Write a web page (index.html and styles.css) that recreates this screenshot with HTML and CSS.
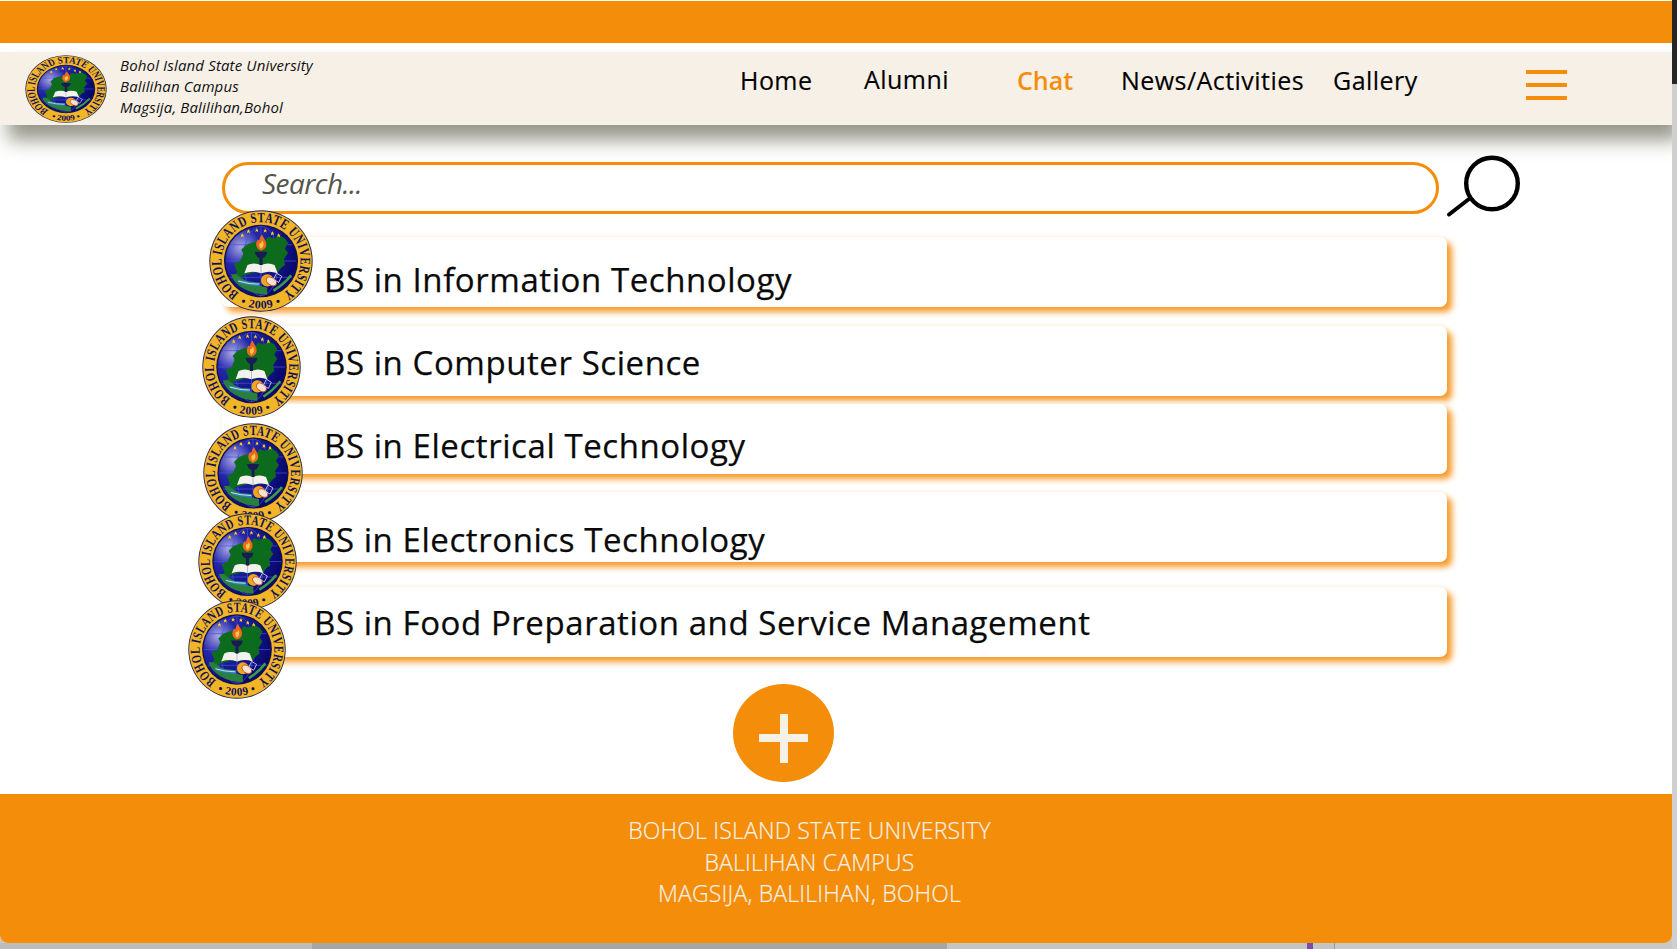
FILE: index.html
```html
<!DOCTYPE html>
<html lang="en">
<head>
<meta charset="utf-8">
<title>Bohol Island State University</title>
<link rel="stylesheet" href="styles.css">
</head>
<body>
<svg class="defs" width="0" height="0" aria-hidden="true">
  <defs>
    <radialGradient id="globe" cx="0.22" cy="0.3" r="0.8">
      <stop offset="0" stop-color="#a8a8e6"/>
      <stop offset="0.35" stop-color="#2326a8"/>
      <stop offset="1" stop-color="#08086c"/>
    </radialGradient>
    <path id="arcTop" d="M28.8 81.5A38 38 0 1 1 71.2 81.5"/>
    <path id="arcBottom" d="M26.7 90.4A46.6 46.6 0 0 0 73.3 90.4"/>
    <path id="star" d="M0-2.3L.7-.7 2.3-.6 1-.4 1.4 1.9 0 .7-1.4 1.9-1-.4-2.3-.6-.7-.7z"/>
    <g id="seal">
      <circle cx="50" cy="50" r="49.7" fill="#23234f"/>
      <circle cx="50" cy="50" r="48.8" fill="#f2b526"/>
      <text class="seal-text" font-size="14"><textPath href="#arcTop" textLength="194" lengthAdjust="spacingAndGlyphs">BOHOL ISLAND STATE UNIVERSITY</textPath></text>
      <text class="seal-text" font-size="11.5" text-anchor="middle"><textPath href="#arcBottom" startOffset="50%">• 2009 •</textPath></text>
      <circle cx="50" cy="50" r="35.6" fill="#10104e"/>
      <circle cx="50" cy="50" r="34.2" fill="url(#globe)"/>
      <g fill="none" stroke="#4a4fe0" stroke-width="0.7">
        <ellipse cx="50" cy="50" rx="17" ry="34"/>
        <path d="M16 50H84M20 34H80M20 66H80M50 16V84"/>
      </g>
      <path d="M24 53l6-3 3-7-2-4 5-5 8-3 4 2 5-2 4-5 5 2 6-3 5 3 3 4-3 6 3 4-4 6 1 6-4 3-4 5-7-3-5 3-9-1-6 2-5 1-3 3-5 1-2-3 4-4z" fill="#0d6b1e"/>
      <path d="M34 62q8-3 16 0q8-3 16 0l-3-8q-6-3-13 0q-7-3-13 0z" fill="#f4f2ec"/>
      <path d="M50 54v8" stroke="#9a9aa8" stroke-width="0.6"/>
      <path d="M44 41h12q-1 5-4.500 6v7h-3v-7q-3.500-1-4.500-6z" fill="#1a1a55"/>
      <path d="M50 40c-5-2-6-7-3-11c1 1 1.500 1 2-2l2-3c1 3 5 7 4 11c-.5 3-3 4-5 5z" fill="#ea6a1c"/>
      <path d="M50 38c-2-2-2-4-1-6c1 1 2 0 2-2c2 2 2 6-1 8z" fill="#f7c64a"/>
      <g fill="#f8d21e">
        <use href="#star" x="32" y="25"/><use href="#star" x="38" y="21"/><use href="#star" x="46" y="20"/>
        <use href="#star" x="54" y="20.500"/><use href="#star" x="61" y="23"/><use href="#star" x="67" y="25"/>
      </g>
      <path d="M21 63q3 9 12 14q10 6 23 6v-7q-16-3-26-10l-4-3z" fill="#2a7f3e"/>
      <path d="M27 68q11 3 22 3v4q-11-1-19-3z" fill="#2c7fb0"/>
      <path d="M28 69.500q10 3 20 3" fill="none" stroke="#bfe6c8" stroke-width="1"/>
      <path d="M79 64q-7 9-17 15" fill="none" stroke="#3d9a4a" stroke-width="2.600"/>
      <circle cx="56" cy="69" r="6" fill="#f0a622"/>
      <ellipse cx="60" cy="70" rx="5.500" ry="3.600" fill="#f7e3cc" stroke="#c2501b" stroke-width="0.900" transform="rotate(35 60 70)"/>
      <path d="M65 62l5 3-3 6-5-3z" fill="none" stroke="#c9c9ef" stroke-width="0.900"/>
    </g>
  </defs>
</svg>

<div class="page">
  <div class="window">
    <div class="frame">
      <div class="topbar"></div>
      <header class="nav">
        <div class="brand">
          <svg class="brand-seal" viewBox="0 0 100 100" preserveAspectRatio="none"><use href="#seal"/></svg>
          <div class="brand-text">
            <div>Bohol Island State University</div>
            <div>Balilihan Campus</div>
            <div>Magsija, Balilihan,Bohol</div>
          </div>
        </div>
        <nav class="links">
          <a>Home</a>
          <a class="up">Alumni</a>
          <a class="active">Chat</a>
          <a>News/Activities</a>
          <a>Gallery</a>
        </nav>
        <div class="burger"><span></span><span></span><span></span></div>
      </header>

      <main class="main">
        <div class="search-row">
          <div class="search">Search...</div>
          <svg class="search-icon" viewBox="0 0 76 64">
            <circle cx="46" cy="29.500" r="25.800" fill="none" stroke="#000" stroke-width="4.400"/>
            <path d="M23 45L3 60.500" fill="none" stroke="#000" stroke-width="4" stroke-linecap="round"/>
          </svg>
        </div>
        <div class="list">
          <div class="card card-1">
            <svg class="seal seal-1" viewBox="0 0 100 100" preserveAspectRatio="none"><use href="#seal"/></svg>
            BS in Information Technology
          </div>
          <div class="card card-2">
            <svg class="seal seal-2" viewBox="0 0 100 100" preserveAspectRatio="none"><use href="#seal"/></svg>
            BS in Computer Science
          </div>
          <div class="card card-3">
            <svg class="seal seal-3" viewBox="0 0 100 100" preserveAspectRatio="none"><use href="#seal"/></svg>
            BS in Electrical Technology
          </div>
          <div class="card card-4">
            <svg class="seal seal-4" viewBox="0 0 100 100" preserveAspectRatio="none"><use href="#seal"/></svg>
            BS in Electronics Technology
          </div>
          <div class="card card-5">
            <svg class="seal seal-5" viewBox="0 0 100 100" preserveAspectRatio="none"><use href="#seal"/></svg>
            BS in Food Preparation and Service Management
          </div>
        </div>
        <div class="add"><span class="plus"></span></div>
      </main>

      <footer class="footer">
        <div>BOHOL ISLAND STATE UNIVERSITY</div>
        <div>BALILIHAN CAMPUS</div>
        <div>MAGSIJA, BALILIHAN, BOHOL</div>
      </footer>
    </div>
    <div class="strip"></div>
  </div>
  <div class="edge"><div class="edge-dark"></div></div>
</div>
</body>
</html>
```

FILE: styles.css
```css
* { box-sizing: border-box; }
html, body { margin: 0; padding: 0; }
body {
  width: 1677px;
  height: 949px;
  overflow: hidden;
  background: #c8c8c8;
  font-family: "Open Sans", "Noto Sans", "Liberation Sans", sans-serif;
  color: #000;
}
.defs { position: absolute; }
.seal-text { font-family: "Liberation Serif", serif; font-weight: 700; fill: #10105a; }

.page { display: flex; width: 1677px; height: 949px; }
.window { width: 1672px; display: flex; flex-direction: column; }
.frame {
  height: 943px;
  padding-top: 1px;
  background: #fff;
  display: flex;
  flex-direction: column;
  overflow: hidden;
  border-radius: 0 0 8px 8px;
}
.strip {
  flex: 1;
  background: linear-gradient(90deg,
    #bcbcbc 0 312px, #a6a6a6 312px 947px, #c4c4c4 947px 1307px,
    #7b4bb0 1307px 1313px, #c4c4c4 1313px 1334px, #9a9a9a 1334px 1335px, #c8c8c8 1335px);
}
.edge { flex: 1; background: #cfcfcf; }
.edge-dark { height: 84px; background: #262626; }

.topbar { height: 42px; background: #f38d0a; }

.nav {
  margin-top: 9px;
  height: 73px;
  display: flex;
  align-items: center;
  background: #f6f0e7;
  box-shadow: 8px 15px 18px #96968a;
  position: relative;
}
.brand { width: 740px; display: flex; align-items: center; padding-left: 25px; }
.brand-seal { width: 82px; height: 68px; margin-top: 1px; }
.brand-text {
  margin-left: 13px;
  margin-top: -4px;
  font-style: italic;
  font-size: 15px;
  letter-spacing: 0.15px;
  line-height: 21px;
  color: #111;
}
.links {
  display: grid;
  grid-template-columns: 124px 153px 104px 212px 84px;
  font-size: 25px;
  font-weight: 500;
  letter-spacing: 0.45px;
  -webkit-text-stroke: 0.15px #000;
  line-height: 32px;
  margin-top: -18px;
}
.links .up { margin-top: -1px; }
.links .active {
  color: #f38d0a;
  font-weight: 600;
  letter-spacing: 0;
  -webkit-text-stroke: 0;
}
.burger {
  margin-left: 109px;
  margin-top: -8px;
  width: 41px;
  display: flex;
  flex-direction: column;
  gap: 9px;
}
.burger span { height: 4px; background: #f38d0a; }

.main { flex: 1; display: flex; flex-direction: column; padding-left: 222px; }
.search-row { display: flex; align-items: flex-start; margin-top: 37px; height: 64px; }
.search {
  width: 1217px;
  height: 52px;
  border: 3px solid #f38d0a;
  border-radius: 26px;
  padding-left: 37px;
  font-size: 28px;
  font-style: italic;
  letter-spacing: -0.55px;
  line-height: 36px;
  color: #555548;
}
.search-icon { width: 76px; height: 64px; margin-left: 7px; margin-top: -8px; }

.list { width: 1225px; margin-top: 11px; }
.card {
  position: relative;
  height: 70px;
  background: #fff;
  border-radius: 7px;
  box-shadow: 5px 5px 6px #f69a28, 0 -1px 4px #fff3e4;
  font-size: 33px;
  font-weight: 500;
  line-height: 44px;
  letter-spacing: 0.57px;
  -webkit-text-stroke: 0.25px #0a0a0a;
  color: #0a0a0a;
}
.card-1 { padding: 21px 0 0 102px; }
.card-2 { margin-top: 19px; padding: 15px 0 0 102px; }
.card-3 { margin-top: 8px; padding: 20px 0 0 102px; }
.card-4 { margin-top: 18px; padding: 26px 0 0 92px; }
.card-5 { margin-top: 25px; padding: 14px 0 0 92px; }

.seal { position: absolute; z-index: 1; }
.seal-1 { left: -13px; top: -27px; width: 104px; height: 102px; }
.seal-2 { left: -20px; top: -10px; width: 99px; height: 102px; }
.seal-3 { left: -19px; top: 19px; width: 100px; height: 100px; }
.seal-4 { left: -24px; top: 21px; width: 99px; height: 97px; }
.seal-5 { left: -34px; top: 13px; width: 98px; height: 99px; }

.add {
  align-self: flex-start;
  margin: 27px 0 0 511px;
  width: 101px;
  height: 98px;
  border-radius: 50%;
  background: #f38d0a;
  display: flex;
  align-items: center;
  justify-content: center;
}
.plus {
  width: 49px;
  height: 49px;
  margin-top: 10px;
  background:
    linear-gradient(#f6f0e7, #f6f0e7) center / 8px 100% no-repeat,
    linear-gradient(#f6f0e7, #f6f0e7) center / 100% 8px no-repeat;
}

.footer {
  height: 149px;
  padding-top: 21px;
  background: #f38d0a;
  color: #f6f0e7;
  text-align: center;
  font-size: 23px;
  font-weight: 300;
  letter-spacing: 0.2px;
  -webkit-text-stroke: 0.2px #f6f0e7;
  line-height: 31.5px;
  padding-right: 53px;
}
```
